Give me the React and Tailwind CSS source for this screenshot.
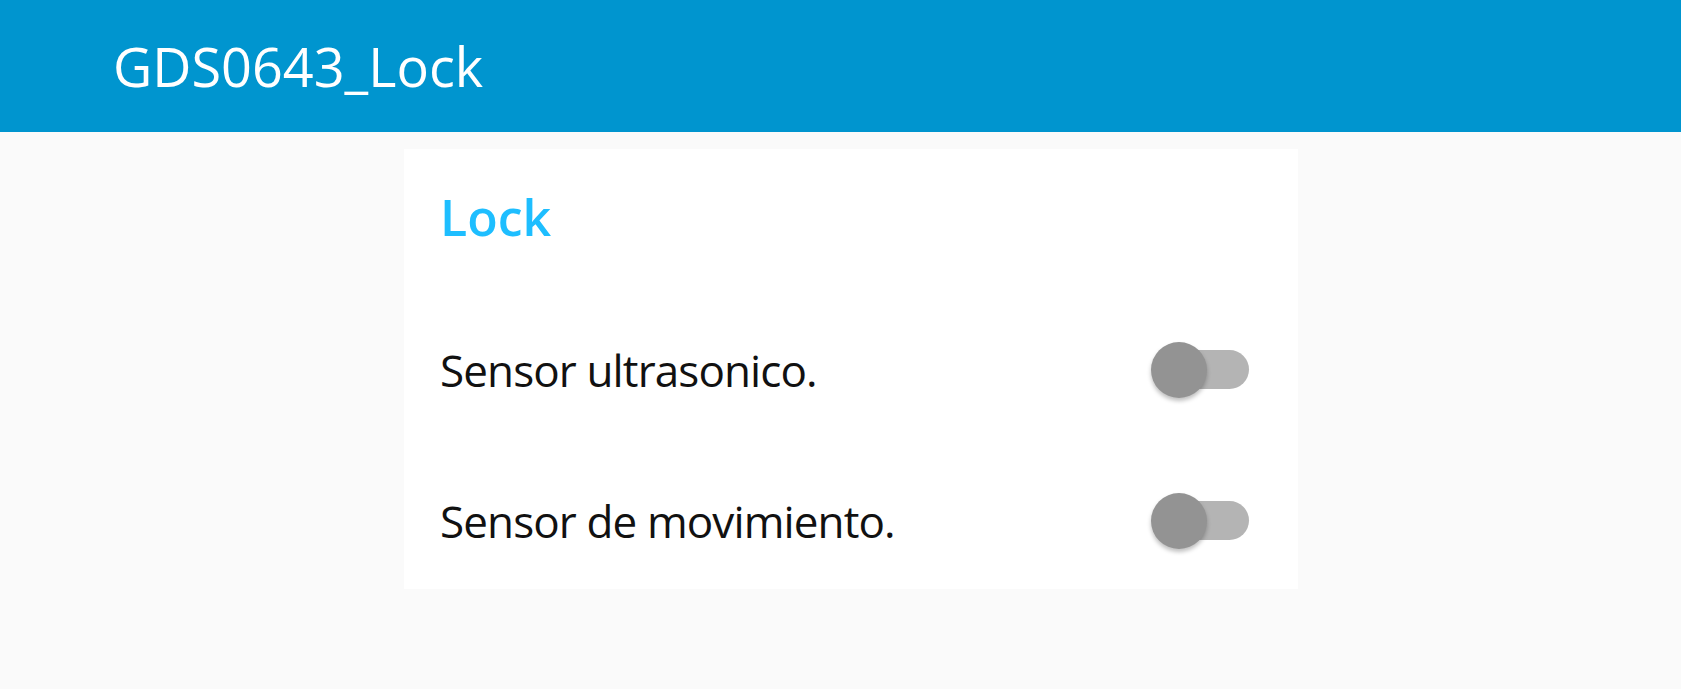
import { useState } from "react";

const Toggle = ({ checked, onChange }) => {
  return (
    <button
      type="button"
      onClick={onChange}
      className="relative flex items-center w-[98px] h-[56px] shrink-0"
    >
      <span
        className={`ml-[2px] w-[96px] h-[39px] rounded-full ${
          checked ? "bg-[#8fd9f7]" : "bg-[#b4b4b4]"
        }`}
      />
      <span
        className={`absolute top-0 size-[56px] rounded-full shadow-[0_3px_4px_rgba(0,0,0,0.25)] ${
          checked ? "left-[42px] bg-[#1ebeff]" : "left-0 bg-[#939393]"
        }`}
      />
    </button>
  );
};

const App = () => {
  // Estados de los sensores
  const [sensors, setSensors] = useState({
    ultrasonico: false,
    movimiento: false,
  });

  const toggle = (key) => {
    setSensors({ ...sensors, [key]: !sensors[key] });
  };

  return (
    <div
      className="min-h-screen bg-[#fafafa]"
      style={{ fontFamily: '"Open Sans", "Noto Sans", sans-serif' }}
    >
      <header className="h-[132px] bg-[#0095cf] flex items-center pl-[113px]">
        <h1 className="text-white text-[54px] leading-none">GDS0643_Lock</h1>
      </header>

      <div className="pt-[17px]">
        <div className="ml-[404px] w-[894px] h-[440px] bg-white overflow-hidden pl-[36px] pr-[49px]">
          <div className="h-[136px] flex items-center">
            <h2 className="text-[#1ebeff] text-[50px] font-semibold leading-none">
              Lock
            </h2>
          </div>
          <div className="pt-[9px]">
            <div className="h-[151px] flex items-center justify-between">
              <span className="text-[#111] text-[44px] leading-none tracking-[-0.02em]">
                Sensor ultrasonico.
              </span>
              <Toggle
                checked={sensors.ultrasonico}
                onChange={() => toggle("ultrasonico")}
              />
            </div>
            <div className="h-[151px] flex items-center justify-between">
              <span className="text-[#111] text-[44px] leading-none tracking-[-0.02em]">
                Sensor de movimiento.
              </span>
              <Toggle
                checked={sensors.movimiento}
                onChange={() => toggle("movimiento")}
              />
            </div>
          </div>
        </div>
      </div>
    </div>
  );
};

export default App;
